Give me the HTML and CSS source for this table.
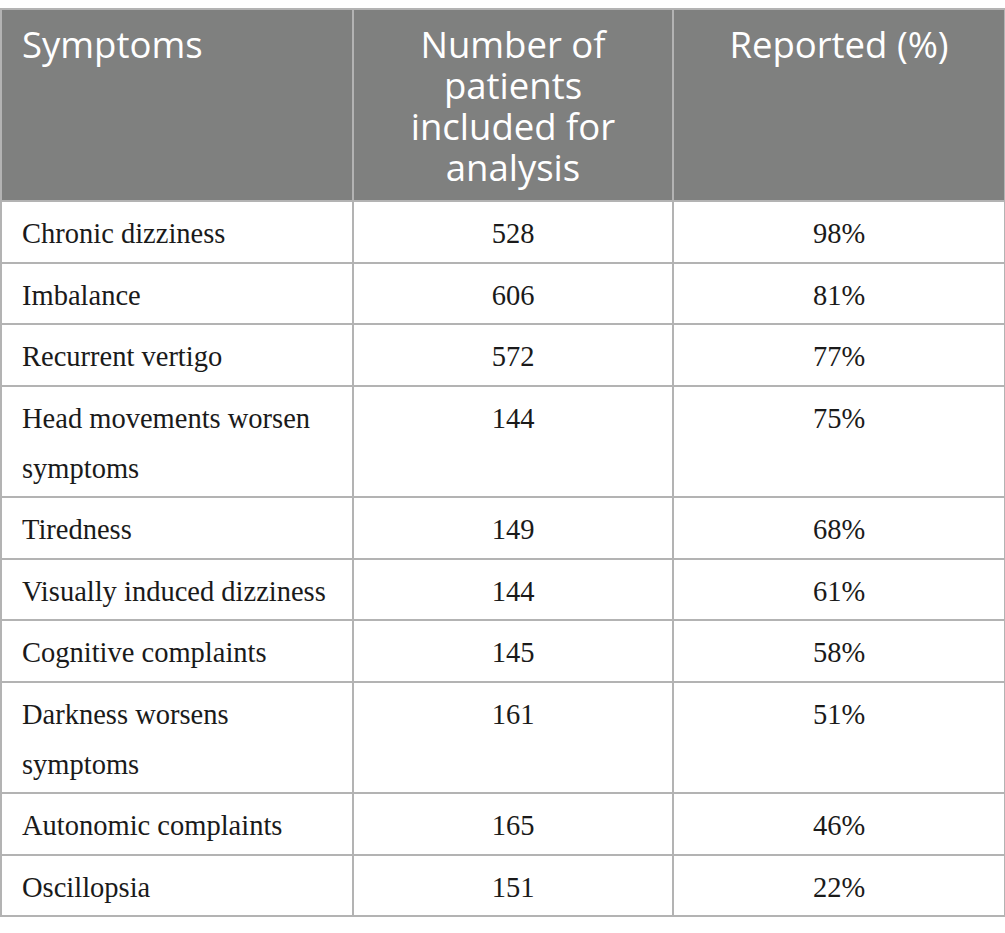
FILE: index.html
```html
<!DOCTYPE html>
<html>
<head>
<meta charset="utf-8">
<link rel="stylesheet" href="styles.css">
</head>
<body>
<table class="tbl">
  <colgroup>
    <col class="c1"><col class="c2"><col class="c3">
  </colgroup>
  <thead>
    <tr>
      <th class="left">Symptoms</th>
      <th>Number of patients included for analysis</th>
      <th>Reported (%)</th>
    </tr>
  </thead>
  <tbody>
    <tr><td class="left">Chronic dizziness</td><td>528</td><td>98%</td></tr>
    <tr><td class="left">Imbalance</td><td>606</td><td>81%</td></tr>
    <tr><td class="left">Recurrent vertigo</td><td>572</td><td>77%</td></tr>
    <tr><td class="left">Head movements worsen symptoms</td><td>144</td><td>75%</td></tr>
    <tr><td class="left">Tiredness</td><td>149</td><td>68%</td></tr>
    <tr><td class="left">Visually induced dizziness</td><td>144</td><td>61%</td></tr>
    <tr><td class="left">Cognitive complaints</td><td>145</td><td>58%</td></tr>
    <tr><td class="left">Darkness worsens symptoms</td><td>161</td><td>51%</td></tr>
    <tr><td class="left">Autonomic complaints</td><td>165</td><td>46%</td></tr>
    <tr><td class="left">Oscillopsia</td><td>151</td><td>22%</td></tr>
  </tbody>
</table>
</body>
</html>
```

FILE: styles.css
```css
html, body {
  margin: 0;
  padding: 0;
  background: #ffffff;
}
body {
  padding-top: 8px;
}
.tbl {
  border-collapse: collapse;
  width: 1004px;
  table-layout: fixed;
}
.c1 { width: 352px; }
.c2 { width: 320px; }
.c3 { width: 332px; }
.tbl th {
  background: #7f807f;
  color: #ffffff;
  font-family: "Open Sans", "Noto Sans", sans-serif;
  font-weight: 400;
  font-size: 36.5px;
  line-height: 41px;
  padding: 14px 30px 12px 30px;
  text-align: center;
  vertical-align: top;
  border: 2px solid #b3b3b3;
}
.tbl th.left {
  text-align: left;
  padding-left: 20px;
}
.tbl td {
  font-family: "Liberation Serif", "Times New Roman", serif;
  font-size: 28.5px;
  line-height: 50px;
  color: #1a1a1a;
  padding: 7px 20px 2.5px 20px;
  text-align: center;
  vertical-align: top;
  border: 2px solid #b3b3b3;
}
.tbl td.left {
  text-align: left;
  padding-left: 20px;
}
```
